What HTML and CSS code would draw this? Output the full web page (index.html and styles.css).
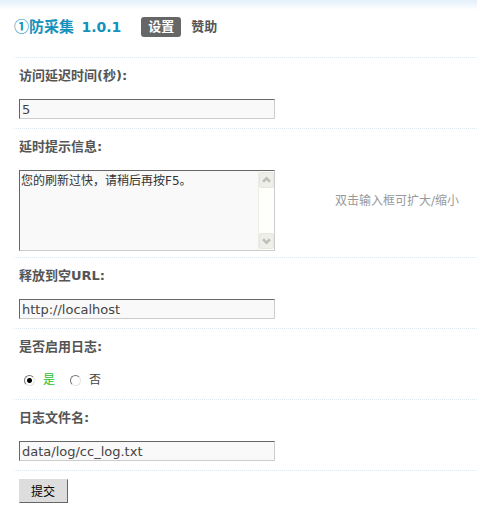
FILE: index.html
```html
<!DOCTYPE html>
<html lang="zh-CN">

<head>
    <meta charset="UTF-8">
    <meta name="viewport" content="width=device-width, initial-scale=1.0">
    <title>防采集 1.0.1</title>
    <link rel="stylesheet" href="styles.css">
</head>

<body>
    <header class="page-header">
        <h1 class="title">①防采集 <span class="version">1.0.1</span></h1>
        <nav class="tabs">
            <a class="tab current" href="#settings">设置</a>
            <a class="tab" href="#sponsor">赞助</a>
        </nav>
    </header>

    <form id="settings" class="settings">
        <div class="row">
            <label class="row-label" for="delay">访问延迟时间(秒):</label>
            <input class="text-field" type="text" id="delay" name="delay" value="5">
        </div>

        <div class="row row-message">
            <label class="row-label" for="message">延时提示信息:</label>
            <div class="field-line">
                <div class="message-box">
                    <textarea class="message" id="message" name="message">您的刷新过快，请稍后再按F5。</textarea>
                    <div class="scrollbar" aria-hidden="true">
                        <svg class="arrow" width="15" height="16" viewBox="0 0 15 16">
                            <path d="M3.5 10 L7.5 6 L11.5 10" />
                        </svg>
                        <svg class="arrow" width="15" height="16" viewBox="0 0 15 16">
                            <path d="M3.5 6 L7.5 10 L11.5 6" />
                        </svg>
                    </div>
                </div>
                <p class="hint">双击输入框可扩大/缩小</p>
            </div>
        </div>

        <div class="row">
            <label class="row-label" for="url">释放到空URL:</label>
            <input class="text-field" type="text" id="url" name="url" value="http://localhost">
        </div>

        <div class="row" role="radiogroup" aria-labelledby="log-label">
            <div class="row-label" id="log-label">是否启用日志:</div>
            <div class="options">
                <label class="option"><input class="radio" type="radio" name="log" value="1" checked><span>是</span></label>
                <label class="option"><input class="radio" type="radio" name="log" value="0"><span>否</span></label>
            </div>
        </div>

        <div class="row">
            <label class="row-label" for="logfile">日志文件名:</label>
            <input class="text-field" type="text" id="logfile" name="logfile" value="data/log/cc_log.txt">
        </div>

        <div class="row">
            <button class="submit" type="submit">提交</button>
        </div>
    </form>
</body>

</html>
```

FILE: styles.css
```css
* {
    box-sizing: border-box;
}

body {
    margin: 0;
    padding-left: 14px;
    background: #fff linear-gradient(#e3f0fa, #fff) repeat-x top / 100% 10px;
    color: #444;
    font: 12px/20px "DejaVu Sans", "Noto Sans CJK SC", sans-serif;
}

.page-header {
    display: flex;
    align-items: center;
    gap: 20px;
    padding: 16px 0 20px;
}

.title {
    margin: 0;
    color: #1592bb;
    font-family: "Noto Sans CJK SC", sans-serif;
    font-size: 15px;
    line-height: 20px;
}

.version {
    margin-left: 4px;
    font-family: "DejaVu Sans", sans-serif;
    font-size: 14px;
}

.tabs {
    display: flex;
    gap: 3px;
}

.tab {
    padding: 0 7px;
    border-radius: 3px;
    color: #555;
    font-size: 13px;
    font-weight: bold;
    text-decoration: none;
}

.tab.current {
    background: #666;
    color: #fff;
}

.row {
    padding: 8px 5px 9px;
    border-top: 1px dotted #dfe8ec;
}

.row-message {
    padding-bottom: 6px;
}

.row-label {
    display: block;
    margin-bottom: 13px;
    color: #555;
    font-size: 13px;
    font-weight: bold;
}

.text-field {
    display: block;
    width: 256px;
    max-width: 100%;
    height: 20px;
    padding: 0 2px;
    border: 1px solid;
    border-color: #666 #ccc #ccc #666;
    background: #f9f9f9;
    color: #444;
    font: 13px "DejaVu Sans", "Noto Sans CJK SC", sans-serif;
}

.field-line {
    display: flex;
    gap: 60px;
}

/* Message box with its scrollbar */
.message-box {
    display: flex;
    width: 256px;
    height: 81px;
    border: 1px solid;
    border-color: #666 #ccc #ccc #666;
}

.message {
    flex: 1;
    min-width: 0;
    padding: 0 1px;
    border: 0;
    background: #f9f9f9;
    color: #333;
    font: 12px/20px "DejaVu Sans", "Noto Sans CJK SC", sans-serif;
    resize: none;
    overflow: hidden;
}

.scrollbar {
    display: flex;
    flex-direction: column;
    justify-content: space-between;
    padding: 1px 0;
    border-left: 1px solid #eeede5;
    background: #fefefb;
}

.arrow {
    display: block;
    border: 1px solid #e6e6df;
    border-radius: 2px;
    background: #efefea;
    fill: none;
    stroke: #c0c0b8;
    stroke-width: 3;
}

.hint {
    margin: 21px 0 0;
    color: #999;
    white-space: nowrap;
}

.options {
    display: flex;
    gap: 15px;
    padding-left: 5px;
}

.option {
    display: flex;
    align-items: center;
    gap: 8px;
}

.radio {
    width: 11px;
    height: 11px;
    margin: 0;
    appearance: none;
    border: 1px solid;
    border-color: #777 #e4e4dc #e4e4dc #777;
    border-radius: 50%;
    background: #fff;
}

.radio:checked {
    background: radial-gradient(circle, #000 2px, #fff 3px);
}

.radio:checked + span {
    color: #1fbf1f;
}

.submit {
    display: block;
    height: 24px;
    padding: 0 12px 2px 11px;
    border: 1px solid;
    border-color: #ddd #666 #666 #ddd;
    background: #ddd;
    color: #000;
    font: 12px "DejaVu Sans", "Noto Sans CJK SC", sans-serif;
}
```
